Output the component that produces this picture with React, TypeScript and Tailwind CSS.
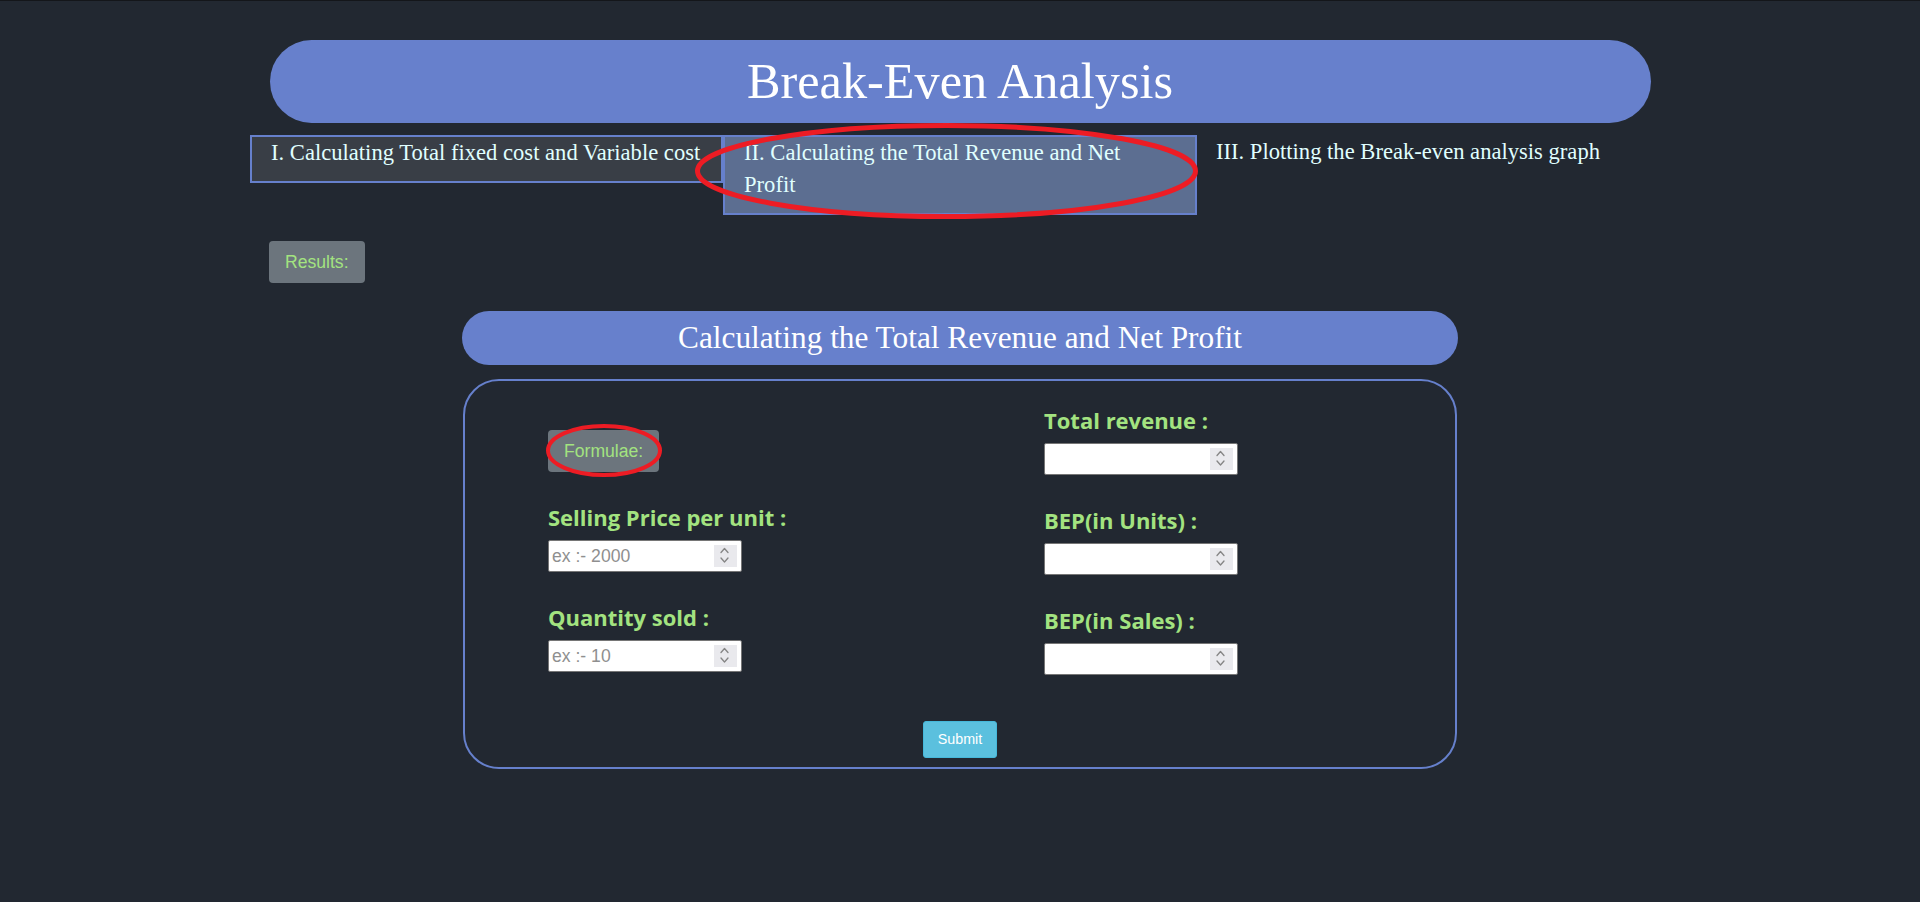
import React from "react";

function Spinner() {
  return (
    <span className="pointer-events-none absolute right-[5px] top-[5px] h-[22px] w-[23px] bg-[#e9e9ed]">
      <svg width="23" height="22" viewBox="0 0 23 22" fill="none">
        <path d="M7 7.5 L10.5 3.5 L14 7.5" stroke="#858585" strokeWidth="1.3" strokeLinecap="round" strokeLinejoin="round" />
        <path d="M7 13 L10.5 17 L14 13" stroke="#858585" strokeWidth="1.3" strokeLinecap="round" strokeLinejoin="round" />
      </svg>
    </span>
  );
}

function Field({ label, placeholder, first }: { label: string; placeholder?: string; first?: boolean }) {
  return (
    <div className={first ? "" : "mt-[34px]"}>
      <div className="h-[24px] whitespace-nowrap font-['Open_Sans',sans-serif] text-[22px] font-bold leading-[22px] text-[#a3e380]">
        {label}
      </div>
      <div className="relative mt-[10px] h-[32px] w-[194px]">
        <input
          type="number"
          placeholder={placeholder}
          className="h-full w-full rounded-[2px] border border-[#767676] bg-white pl-[3px] pr-[30px] font-['Liberation_Sans',Arial,sans-serif] text-[17.6px] text-black outline-none [appearance:textfield] placeholder:text-[#8f8f8f] [&::-webkit-inner-spin-button]:appearance-none [&::-webkit-outer-spin-button]:appearance-none"
        />
        <Spinner />
      </div>
    </div>
  );
}

export default function App() {
  return (
    <div className="min-h-screen w-full border-t border-[#14161a] bg-[#222831] pb-10">
      {/* Title */}
      <div className="mx-auto mt-[39px] flex h-[83px] w-[1381px] items-center justify-center rounded-full bg-[#6780cc]">
        <h1 className="font-['Liberation_Serif','Times_New_Roman',serif] text-[50.3px] font-normal text-white">
          Break-Even Analysis
        </h1>
      </div>

      {/* Tabs */}
      <div className="ml-[250px] mt-[12px] flex items-start font-['Liberation_Serif','Times_New_Roman',serif] text-[22.6px] leading-[32px] text-[#e0ffff]">
        <div className="w-[473px] border-2 border-[#6680cc] bg-[#393e46] pb-[12px] pl-[19px] pr-[10px] whitespace-nowrap">
          I. Calculating Total fixed cost and Variable cost
        </div>
        <div className="relative w-[474px] border-2 border-[#6680cc] bg-[#5c6e91] pb-[12px] pl-[19px] pr-[45px]">
          II. Calculating the Total Revenue and Net Profit
          <svg
            className="pointer-events-none absolute left-[-30px] top-[-14px]"
            width="503"
            height="96"
            viewBox="0 0 503 96"
            fill="none"
          >
            <ellipse cx="251.5" cy="48" rx="249" ry="45.5" stroke="#ed1c24" strokeWidth="5" />
          </svg>
        </div>
        <div className="pl-[19px] pt-[1px] whitespace-nowrap">III. Plotting the Break-even analysis graph</div>
      </div>

      {/* Results button */}
      <div className="ml-[269px] mt-[26px]">
        <button className="flex h-[42px] items-center rounded-[4px] bg-[#6c757d] px-[16px] font-['Liberation_Sans',Arial,sans-serif] text-[17.6px] text-[#a3e380]">
          Results:
        </button>
      </div>

      {/* Section header */}
      <div className="mx-auto mt-[28px] flex h-[54px] w-[996px] items-center justify-center rounded-full bg-[#6780cc]">
        <h2 className="font-['Liberation_Serif','Times_New_Roman',serif] text-[31.3px] font-normal text-white">
          Calculating the Total Revenue and Net Profit
        </h2>
      </div>

      {/* Form box */}
      <div className="mx-auto mt-[14px] flex w-[994px] flex-col rounded-[36px] border-2 border-[#6680cc] pb-[9px]">
        <div className="grid grid-cols-2">
          <div className="pl-[83px]">
            <div className="relative mt-[49px] w-fit">
              <button className="flex h-[42px] items-center rounded-[4px] bg-[#6c757d] px-[16px] font-['Liberation_Sans',Arial,sans-serif] text-[17.6px] text-[#a3e380]">
                Formulae:
              </button>
              <svg
                className="pointer-events-none absolute left-[-2px] top-[-6px]"
                width="116"
                height="53"
                viewBox="0 0 116 53"
                fill="none"
              >
                <ellipse cx="58" cy="26.5" rx="56" ry="24.5" stroke="#ed1c24" strokeWidth="4" />
              </svg>
            </div>
            <div className="mt-[34px]">
              <Field label="Selling Price per unit :" placeholder="ex :- 2000" first />
            </div>
            <Field label="Quantity sold :" placeholder="ex :- 10" />
          </div>
          <div className="pl-[84px] pt-[28px]">
            <Field label="Total revenue :" first />
            <Field label="BEP(in Units) :" />
            <Field label="BEP(in Sales) :" />
          </div>
        </div>
        <div className="mt-[46px] flex justify-center">
          <button className="flex h-[37px] items-center rounded-[3px] border border-[#46b8da] bg-[#5bc0de] px-[14px] font-['Liberation_Sans',Arial,sans-serif] text-[14.3px] text-white">
            Submit
          </button>
        </div>
      </div>
    </div>
  );
}
